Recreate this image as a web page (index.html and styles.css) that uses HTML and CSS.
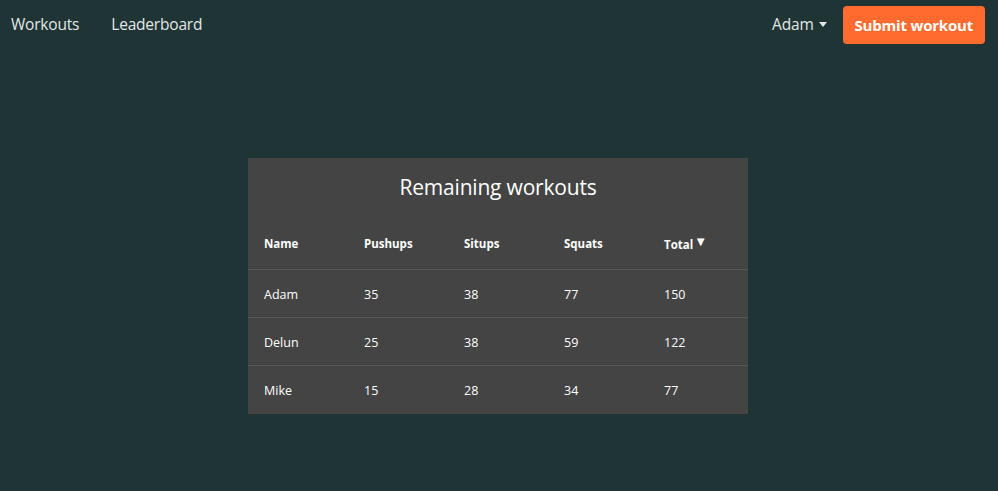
FILE: index.html
```html
<!DOCTYPE html>
<html>
<head>
<meta charset="utf-8">
<link rel="stylesheet" href="styles.css">
</head>
<body>
<nav class="nav">
  <div class="nav-left">
    <a class="nav-link">Workouts</a>
    <a class="nav-link">Leaderboard</a>
  </div>
  <div class="nav-right">
    <a class="nav-link user">Adam<span class="caret"></span></a>
    <button class="submit">Submit workout</button>
  </div>
</nav>
<main class="main">
  <section class="card">
    <h1 class="title">Remaining workouts</h1>
    <table class="table">
      <thead>
        <tr><th>Name</th><th>Pushups</th><th>Situps</th><th>Squats</th><th>Total<span class="sort">&#9660;</span></th></tr>
      </thead>
      <tbody>
        <tr><td>Adam</td><td>35</td><td>38</td><td>77</td><td>150</td></tr>
        <tr><td>Delun</td><td>25</td><td>38</td><td>59</td><td>122</td></tr>
        <tr><td>Mike</td><td>15</td><td>28</td><td>34</td><td>77</td></tr>
      </tbody>
    </table>
  </section>
</main>
</body>
</html>
```
FILE: styles.css
```css
* { box-sizing: border-box; }
html, body { margin: 0; height: 100%; }
body {
  background: #1e3435;
  font-family: "Open Sans", "Noto Sans", sans-serif;
  color: #fff;
}
.nav {
  display: flex;
  justify-content: space-between;
  align-items: center;
  height: 48px;
  padding: 0 13px 0 11px;
}
.nav-left, .nav-right { display: flex; align-items: center; }
.nav-link {
  color: #e3e6e6;
  font-size: 15.5px;
  letter-spacing: -0.2px;
}
.nav-left .nav-link + .nav-link { margin-left: 32px; }
.user { display: flex; align-items: center; margin-right: 16px; }
.caret {
  display: inline-block;
  width: 0; height: 0;
  margin-left: 5px;
  border-left: 4.5px solid transparent;
  border-right: 4.5px solid transparent;
  border-top: 5px solid #e3e6e6;
}
.submit {
  background: #ff6a2f;
  color: #fff;
  border: 0;
  border-radius: 4px;
  height: 38px;
  padding: 0 12px;
  font-family: inherit;
  font-weight: 700;
  font-size: 15px;
  letter-spacing: -0.2px;
  margin-top: 1px;
}
.main {
  display: flex;
  justify-content: center;
  padding-top: 110px;
  padding-right: 2px;
}
.card {
  width: 500px;
  background: #444444;
  padding-bottom: 1px;
}
.title {
  margin: 0;
  height: 58px;
  padding-top: 14px;
  text-align: center;
  font-weight: 400;
  font-size: 21px;
  line-height: 30px;
  letter-spacing: -0.2px;
}
.table {
  width: 100%;
  border-collapse: collapse;
  table-layout: fixed;
  font-size: 12.5px;
}
.table th, .table td {
  text-align: left;
  padding: 0 0 0 16px;
  width: 100px;
}
.table th {
  height: 53px;
  font-weight: 700;
  font-size: 11.5px;
  padding-top: 2px;
  border-bottom: 1px solid #575757;
}
.sort { font-size: 13px; margin-left: 1px; vertical-align: 3px; line-height: 1; }
.table td { height: 48px; padding-top: 2px; }
.table tbody tr + tr td { border-top: 1px solid #575757; }
```
